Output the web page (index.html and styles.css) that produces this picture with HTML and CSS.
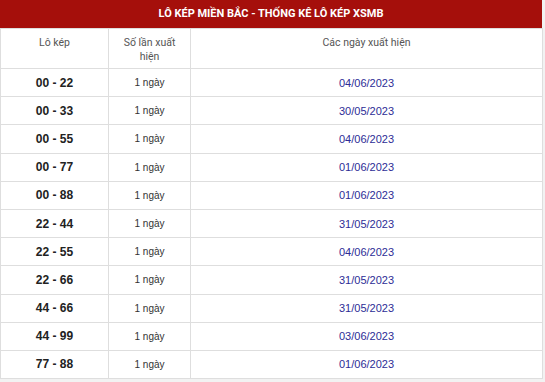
FILE: index.html
```
<!DOCTYPE html>
<html lang="vi">
<head>
<meta charset="utf-8">
<link rel="stylesheet" href="styles.css">
</head>
<body>
<div class="box">
  <div class="title">LÔ KÉP MIỀN BẮC - THỐNG KÊ LÔ KÉP XSMB</div>
  <table class="tbl">
    <colgroup><col class="c1"><col class="c2"><col class="c3"></colgroup>
    <thead>
      <tr><th>Lô kép</th><th>Số lần xuất<br>hiện</th><th>Các ngày xuất hiện</th></tr>
    </thead>
    <tbody>
      <tr><td class="pair">00 - 22</td><td class="cnt">1 ngày</td><td class="date">04/06/2023</td></tr>
      <tr><td class="pair">00 - 33</td><td class="cnt">1 ngày</td><td class="date">30/05/2023</td></tr>
      <tr><td class="pair">00 - 55</td><td class="cnt">1 ngày</td><td class="date">04/06/2023</td></tr>
      <tr><td class="pair">00 - 77</td><td class="cnt">1 ngày</td><td class="date">01/06/2023</td></tr>
      <tr><td class="pair">00 - 88</td><td class="cnt">1 ngày</td><td class="date">01/06/2023</td></tr>
      <tr><td class="pair">22 - 44</td><td class="cnt">1 ngày</td><td class="date">31/05/2023</td></tr>
      <tr><td class="pair">22 - 55</td><td class="cnt">1 ngày</td><td class="date">04/06/2023</td></tr>
      <tr><td class="pair">22 - 66</td><td class="cnt">1 ngày</td><td class="date">31/05/2023</td></tr>
      <tr><td class="pair">44 - 66</td><td class="cnt">1 ngày</td><td class="date">31/05/2023</td></tr>
      <tr><td class="pair">44 - 99</td><td class="cnt">1 ngày</td><td class="date">03/06/2023</td></tr>
      <tr><td class="pair">77 - 88</td><td class="cnt">1 ngày</td><td class="date">01/06/2023</td></tr>
    </tbody>
  </table>
</div>
</body>
</html>
```
FILE: styles.css
```
html, body {
  margin: 0;
  padding: 0;
  background: #f2f2f2;
}
.box {
  width: 542px;
  background: #fff;
}
.title {
  height: 28px;
  line-height: 28px;
  background: #a50f0b;
  color: #fff;
  text-align: center;
  font-family: Roboto, "Liberation Sans", sans-serif;
  font-weight: 700;
  font-size: 11px;
}
.tbl {
  width: 542px;
  border-collapse: collapse;
  table-layout: fixed;
  background: #fff;
}
.c1 { width: 108px; }
.c2 { width: 82px; }
.c3 { width: 352px; }
.tbl th, .tbl td {
  border: 1px solid #dedede;
  padding: 0;
  text-align: center;
}
.tbl th {
  height: 40px;
  vertical-align: top;
  padding-top: 7px;
  font-family: Roboto, "Liberation Sans", sans-serif;
  font-weight: 400;
  font-size: 10.5px;
  line-height: 14px;
  color: #555;
  box-sizing: border-box;
}
.tbl td {
  height: 27.2px;
  vertical-align: middle;
  font-family: "Liberation Sans", Arial, sans-serif;
}
.pair {
  font-weight: 700;
  font-size: 12px;
  color: #222;
}
.cnt {
  font-size: 10px;
  color: #333;
}
.date {
  font-size: 11px;
  color: #2d2d96;
}
```
